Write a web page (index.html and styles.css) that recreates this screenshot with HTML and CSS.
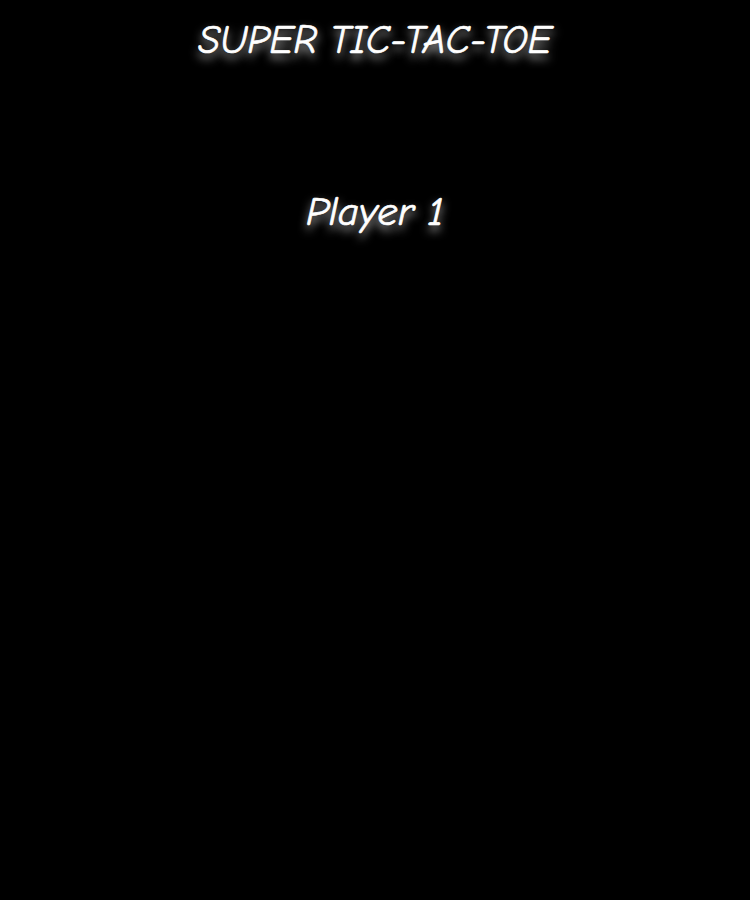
FILE: index.html
```html
<!DOCTYPE html>
<html><head><meta charset="utf-8"><link rel="stylesheet" href="styles.css"></head>
<body>
<main class="app">
  <h1 class="title">SUPER TIC-TAC-TOE</h1>
  <div class="player">Player 1</div>
</main>
</body></html>
```
FILE: styles.css
```css
html,body{margin:0;padding:0;background:#000;height:100%}
.app{display:flex;flex-direction:column;align-items:center;color:#fff;font-family:"Comic Neue","Comic Sans MS",cursive;font-style:italic;font-weight:400}
.title{margin:16px 0 0;font-size:39.5px;font-weight:400;line-height:48px;-webkit-text-stroke:0.7px #fff;text-shadow:0 5px 10px rgba(255,255,255,.85)}
.player{margin-top:124px;font-size:41px;line-height:48px;-webkit-text-stroke:0.7px #fff;text-shadow:0 5px 10px rgba(255,255,255,.85)}
```
